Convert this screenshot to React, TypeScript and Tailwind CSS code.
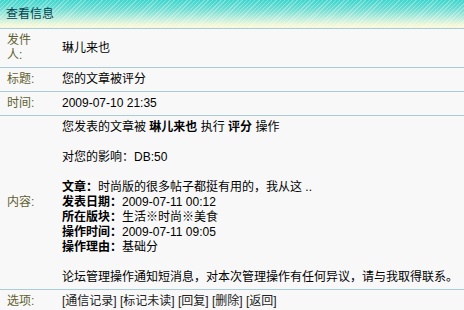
import React from 'react';

const Row: React.FC<{ label: string; children: React.ReactNode }> = ({ label, children }) => (
  <div className="grid grid-cols-[56px_1fr] border-t border-[#a9cdd6] bg-[#f8f8f8]">
    <div className="flex items-center pl-[7px] pr-[17px] py-[4px] text-[#5f5f30]">{label}</div>
    <div className="pl-[6px] pr-1 py-[4px] text-black">{children}</div>
  </div>
);

const App: React.FC = () => {
  return (
    <div className="w-[464px] h-[310px] overflow-hidden bg-white text-[12px] leading-[15px] font-['Liberation_Sans','Noto_Sans_CJK_SC',sans-serif]">
      <div className="h-[28px] flex items-center pl-[6px] text-[#083f4c] bg-[repeating-linear-gradient(135deg,rgba(255,255,255,0.3)_0px,rgba(255,255,255,0.3)_1px,transparent_1px,transparent_3px),linear-gradient(to_bottom,#3ed6ce_0%,#74ded4_35%,#b8ecdc_65%,#f4f8d8_90%,#f6f8dc_100%)]">
        查看信息
      </div>
      <Row label="发件人:">
        <div className="flex items-center h-full">琳儿来也</div>
      </Row>
      <Row label="标题:">您的文章被评分</Row>
      <Row label="时间:">2009-07-10 21:35</Row>
      <Row label="内容:">
        <div className="whitespace-nowrap">
          <div>
            您发表的文章被 <b>琳儿来也</b> 执行 <b>评分</b> 操作
          </div>
          <div>&nbsp;</div>
          <div>对您的影响：DB:50</div>
          <div>&nbsp;</div>
          <div>
            <b>文章：</b>时尚版的很多帖子都挺有用的，我从这 ..
          </div>
          <div>
            <b>发表日期：</b>2009-07-11 00:12
          </div>
          <div>
            <b>所在版块：</b>生活※时尚※美食
          </div>
          <div>
            <b>操作时间：</b>2009-07-11 09:05
          </div>
          <div>
            <b>操作理由：</b>基础分
          </div>
          <div>&nbsp;</div>
          <div>论坛管理操作通知短消息，对本次管理操作有任何异议，请与我取得联系。</div>
        </div>
      </Row>
      <Row label="选项:">
        <span className="text-[#222]">[通信记录] [标记未读] [回复] [删除] [返回]</span>
      </Row>
    </div>
  );
};

export default App;
